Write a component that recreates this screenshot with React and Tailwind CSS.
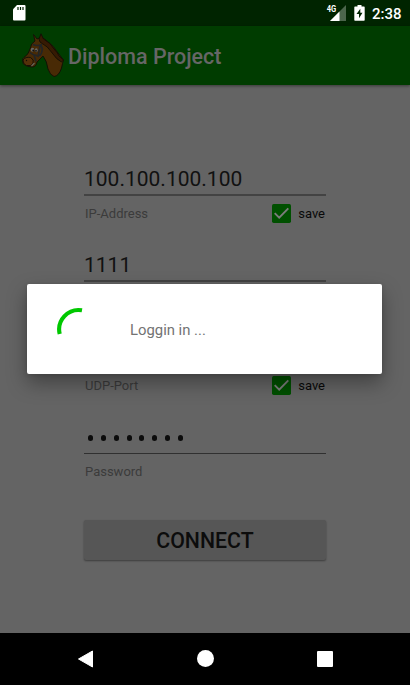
import React from "react";

function Horse() {
  return (
    <svg className="h-[46px] w-[44px] shrink-0" viewBox="0 0 44 46">
      <g stroke="#120d05" strokeWidth="0.9" strokeLinejoin="round">
        <path fill="#482a05" d="M13 8 L11.5 1.500 L15 6 Q20 3 25 8 Q32 13 36 20 L41.500 27 Q40.500 30 39.500 35 Q37 43 32 43.500 Q28 42 26 36 Q25 28 21 23 Q18 26 15 29 Q14 34 10 34 Q5 34 1.5 31 Q-0.500 26 2 24.500 Q7 21 8 16 Q9 10 13 8Z" />
        <path fill="#361a03" d="M17 6 L19 0.800 L21.5 6 Q29 10 32 16 Q36 20 37 23 L41.500 27 L39.500 29 Q34 26 31 21 Q26 13 18 9Z" />
        <path fill="#55300a" d="M1 27 Q3.500 23.500 8.500 24.500 Q12.500 26.500 11 30.500 Q9.500 33.500 4.500 32.500 Q1 31.500 1 27Z" />
      </g>
      <path fill="none" stroke="#222426" strokeWidth="1.6" d="M11 11.500 Q15 13.500 20 11.500 M19 12.500 Q22 17 18 22.500 M8 19.500 Q13 24 18 22 M12 22 L14 28.500 M18 12.500 L16 24" />
      <ellipse cx="10.500" cy="16.800" rx="1.800" ry="2" fill="#656563" />
      <ellipse cx="14.300" cy="17.300" rx="1.400" ry="2" fill="#656563" />
      <circle cx="11.300" cy="17.500" r="1" fill="#101010" />
      <circle cx="14" cy="17.800" r="0.900" fill="#101010" />
      <path d="M9.500 33 L12.500 30" stroke="#6a665e" strokeWidth="1.100" />
      <circle cx="4.500" cy="27.500" r="0.700" fill="#120d05" />
    </svg>
  );
}

function StatusBar() {
  return (
    <div className="flex h-[26px] shrink-0 items-center bg-[#002400] text-white">
      <svg className="ml-[13px] h-[16px] w-[13px]" viewBox="0 0 13 16">
        <path fill="#fff" d="M4 0H11.5Q12.5 0 12.5 1V14.5Q12.5 15.5 11.5 15.5H1Q0 15.5 0 14.5V4.3Z" />
        <path stroke="#002400" strokeWidth="1.2" d="M5 2V5M7.5 2V5M10 2V5" />
      </svg>
      <svg className="ml-[300px] h-[17px] w-[20px] shrink-0" viewBox="0 0 20 17">
        <path fill="#4c664c" d="M4 16V16L20 0V16Z" />
        <path fill="#fff" d="M4 16L13.5 6.5V16Z" />
        <rect width="11" height="8" fill="#002400" />
        <text x="0.7" y="7.4" fill="#fff" fontSize="8.6" fontWeight="700" fontFamily="Roboto, sans-serif" textLength="9.5" lengthAdjust="spacingAndGlyphs">4G</text>
      </svg>
      <svg className="ml-[8px] h-[16px] w-[11px] shrink-0" viewBox="0 0 11 16">
        <path fill="#fff" d="M3.5 0H7.5V1.5H10Q10.7 1.5 10.7 2.2V15Q10.7 15.7 10 15.7H1Q.3 15.7 .3 15V2.2Q.3 1.5 1 1.5H3.5Z" />
        <path fill="#002400" d="M6.3 3.8L2.5 9H5V13.2L8.5 7.8H6.3Z" />
      </svg>
      <span className="ml-[7px] mt-[1px] whitespace-nowrap text-[15px] font-medium leading-[18px]">2:38</span>
    </div>
  );
}

function Field({ value, label, save }) {
  return (
    <div className="flex h-[86px] flex-col">
      <div className={`h-[34px] pt-[5px] text-[21px] leading-[25px] text-[#111] ${save ? "border-b-2 border-[#434343]" : "border-b border-[#303030]"}`}>{value}</div>
      <div className="flex h-[36px] items-center justify-between pr-px pl-px text-[13px]">
        <span className="text-[#3b3b3b]">{label}</span>
        {save && (
          <span className="flex items-center text-[#090909]">
            <svg className="mr-[7px] mb-[2px] h-[19px] w-[19px]" viewBox="0 0 19 19">
              <rect width="19" height="19" rx="1.7" fill="#005000" />
              <path fill="none" stroke="#7c7c7c" strokeWidth="1.9" d="M2.7 9.2L7.2 13.7L16.3 4.4" />
            </svg>
            save
          </span>
        )}
      </div>
    </div>
  );
}

function Dots() {
  return (
    <span className="flex h-[25px] items-center gap-[7.85px] pl-[4px]">
      {Array.from({ length: 8 }, (_, i) => (
        <i key={i} className="h-[6px] w-[5px] rounded-full bg-[#0c0c0c]" />
      ))}
    </span>
  );
}

export default function App() {
  return (
    <div className="relative flex h-[685px] w-[410px] flex-col overflow-hidden bg-[#646464] font-['Roboto',sans-serif]">
      <StatusBar />
      <header className="flex h-[59px] shrink-0 items-center bg-[#003c00] pl-[22px] shadow-[0_1px_3px_rgba(0,0,0,0.45)]">
        <Horse />
        <h1 className="ml-[2px] mt-[3px] text-[21.5px] font-medium leading-[26px] text-[#666]">Diploma Project</h1>
      </header>
      <main className="flex flex-1 flex-col px-[84px] pt-[77px]">
        <Field value="100.100.100.100" label="IP-Address" save />
        <Field value="1111" label="TCP-Port" save />
        <Field value="2222" label="UDP-Port" save />
        <Field value={<Dots />} label="Password" />
        <button className="mt-[14px] h-[40px] w-full rounded-[2px] bg-[#565656] pt-px text-[21.3px] font-medium leading-[40px] text-[#0c0c0c] shadow-[0_1px_2px_rgba(0,0,0,0.4)]">CONNECT</button>
      </main>
      <nav className="flex h-[52px] shrink-0 items-center justify-between bg-black pr-[77.5px] pb-px pl-[77px]">
        <svg className="h-[18px] w-[17px]" viewBox="0 0 17 18">
          <path fill="#fff" stroke="#fff" strokeLinejoin="round" d="M1.5 9L15.5 1V17Z" />
        </svg>
        <span className="h-[17.5px] w-[17.5px] rounded-full bg-white" />
        <span className="h-[16px] w-[16px] rounded-[1px] bg-white" />
      </nav>
      <div role="dialog" className="absolute top-[284px] left-[27px] flex h-[90px] w-[355px] items-center rounded-[2px] bg-white shadow-[0_9px_20px_rgba(0,0,0,0.35),0_1px_5px_rgba(0,0,0,0.12)]">
        <svg className="ml-[29px] h-[44px] w-[44px]" viewBox="0 0 44 44">
          <path d="M3.7 27A19.5 19.5 0 0 1 26 3.3" fill="none" stroke="#00c800" strokeWidth="4.1" />
        </svg>
        <span className="ml-[30px] mt-[2px] text-[14.85px] leading-[18px] text-[#737373]">Loggin in ...</span>
      </div>
    </div>
  );
}
